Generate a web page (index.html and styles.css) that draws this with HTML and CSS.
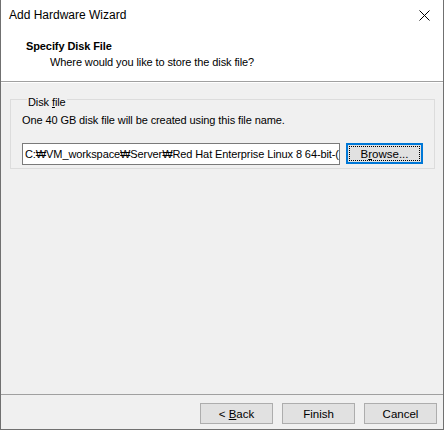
FILE: index.html
```html
<!DOCTYPE html>
<html>
<head>
<meta charset="utf-8">
<link rel="stylesheet" href="styles.css">
</head>
<body>
<div class="window">
  <div class="titlebar">
    <span class="title">Add Hardware Wizard</span>
    <svg class="close" width="11" height="11" viewBox="0 0 11 11"><path d="M0.5 0.5 L10.5 10.5 M10.5 0.5 L0.5 10.5" stroke="#000" stroke-width="1" fill="none"/></svg>
  </div>
  <div class="header">
    <div class="h-title">Specify Disk File</div>
    <div class="h-sub">Where would you like to store the disk file?</div>
  </div>
  <div class="content">
    <fieldset class="group">
      <legend class="legend">Disk <span class="ul">f</span>ile</legend>
      <div class="desc">One 40 GB disk file will be created using this file name.</div>
      <div class="row">
        <div class="textbox"><span class="tb-text">C:₩VM_workspace₩Server₩Red Hat Enterprise Linux 8 64-bit-(</span></div>
        <button class="btn focused"><span class="focus">B<span class="ul">r</span>owse...</span></button>
      </div>
    </fieldset>
  </div>
  <div class="footer">
    <button class="btn"><span class="lbl">&lt; <span class="ul">B</span>ack</span></button>
    <button class="btn"><span class="lbl">Finish</span></button>
    <button class="btn"><span class="lbl">Cancel</span></button>
  </div>
</div>
</body>
</html>
```
FILE: styles.css
```css
html, body {
  margin: 0;
  padding: 0;
  background: #f0f0f0;
}
.window {
  width: 444px;
  height: 430px;
  box-sizing: border-box;
  border: 1px solid #707070;
  border-top: none;
  display: flex;
  flex-direction: column;
  font-family: "Liberation Sans", Arial, sans-serif;
  font-size: 11px;
  letter-spacing: -0.1px;
  color: #000;
  background: #f0f0f0;
}
.titlebar {
  height: 30px;
  background: #fff;
  display: flex;
  align-items: center;
  justify-content: space-between;
  padding: 0 13px 0 8px;
}
.title {
  font-size: 12px;
  letter-spacing: 0;
}
.header {
  background: #fff;
  height: 52px;
  border-bottom: 1px solid #a0a0a0;
  box-sizing: border-box;
  padding: 8px 0 0 25px;
}
.h-title {
  font-weight: bold;
  line-height: 16px;
}
.h-sub {
  padding-left: 24px;
  line-height: 17px;
}
.content {
  flex: 1;
  padding: 10px 9px 0 9px;
  border-top: 1px solid #fff;
}
.group {
  margin: 0;
  border: 1px solid #dcdcdc;
  padding: 7px 11px 12px 11px;
  height: 76px;
  box-sizing: border-box;
}
.legend {
  padding: 0 1px;
  margin-left: 5px;
  line-height: 12px;
  position: relative;
  top: 3px;
}
.ul {
  text-decoration: underline;
}
.desc {
  line-height: 16px;
}
.row {
  display: flex;
  margin-top: 15px;
  gap: 6px;
}
.textbox {
  width: 318px;
  height: 22px;
  box-sizing: border-box;
  border: 1px solid #7a7a7a;
  background: #fff;
  white-space: nowrap;
  overflow: hidden;
  line-height: 20px;
  padding-left: 2px;
}
.btn {
  width: 73px;
  height: 21px;
  box-sizing: border-box;
  background: #e1e1e1;
  border: 1px solid #adadad;
  font-family: "Liberation Sans", Arial, sans-serif;
  font-size: 11.5px;
  color: #000;
  padding: 0;
  display: flex;
  align-items: center;
  justify-content: center;
}
.btn.focused {
  width: 77px;
  border: 2px solid #0078d7;
  padding: 1px;
}
.focus {
  flex: 1;
  align-self: stretch;
  border: 1px dotted #000;
  display: flex;
  align-items: center;
  justify-content: center;
}
.lbl {
  white-space: pre;
}
.footer {
  height: 35px;
  border-top: 1px solid #a0a0a0;
  box-sizing: border-box;
  display: flex;
  justify-content: flex-end;
  align-items: flex-start;
  gap: 9px;
  padding: 8px 6px 0 0;
}
```
